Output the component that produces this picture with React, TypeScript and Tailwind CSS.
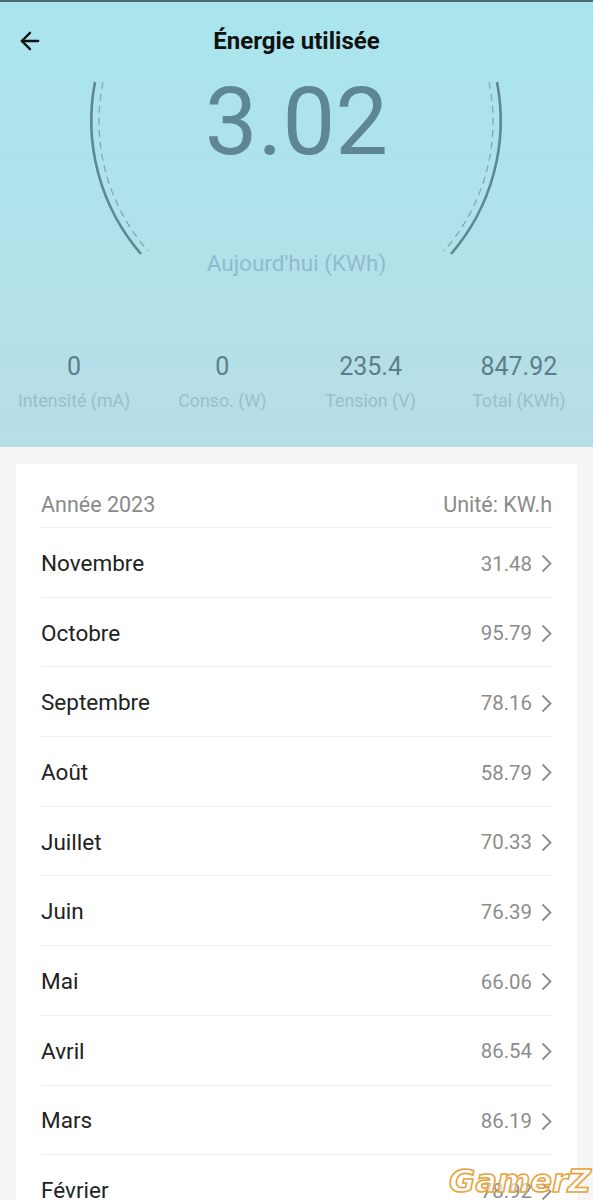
import { ArrowLeft } from 'lucide-react';

// ── Data ──────────────────────────────────────────────────────────────────────

const STATS = [
  { value: '0', label: 'Intensité (mA)' },
  { value: '0', label: 'Conso. (W)' },
  { value: '235.4', label: 'Tension (V)' },
  { value: '847.92', label: 'Total (KWh)' },
];

const MONTHS = [
  { name: 'Novembre', kwh: '31.48' },
  { name: 'Octobre', kwh: '95.79' },
  { name: 'Septembre', kwh: '78.16' },
  { name: 'Août', kwh: '58.79' },
  { name: 'Juillet', kwh: '70.33' },
  { name: 'Juin', kwh: '76.39' },
  { name: 'Mai', kwh: '66.06' },
  { name: 'Avril', kwh: '86.54' },
  { name: 'Mars', kwh: '86.19' },
  { name: 'Février', kwh: '78.92' },
];

// ── Gauge arcs ────────────────────────────────────────────────────────────────

function GaugeArcs() {
  // circle centred at (296,127), drawn in page coordinates
  return (
    <svg
      className="absolute left-0 top-0"
      width="593"
      height="300"
      viewBox="0 0 593 300"
      fill="none"
    >
      <path d="M95 80 A204 204 0 0 0 141 252" stroke="#5f8693" strokeWidth="2.6" />
      <path d="M497 80 A204 204 0 0 1 451 252" stroke="#5f8693" strokeWidth="2.6" />
      <path
        d="M103 80 A196 196 0 0 0 148 249"
        stroke="#7fa3ad"
        strokeWidth="1.2"
        strokeDasharray="7 5"
      />
      <path
        d="M489 80 A196 196 0 0 1 444 249"
        stroke="#7fa3ad"
        strokeWidth="1.2"
        strokeDasharray="7 5"
      />
    </svg>
  );
}

function Chevron() {
  return (
    <svg width="11" height="19" viewBox="0 0 11 19" fill="none" className="ml-[9px]">
      <path d="M1.5 1.5 L9.5 9.5 L1.5 17.5" stroke="#8c8c8c" strokeWidth="1.8" />
    </svg>
  );
}

// ── Page ──────────────────────────────────────────────────────────────────────

export default function App() {
  return (
    <div className="relative h-[1200px] w-[593px] overflow-hidden bg-[#f5f5f5] font-['Roboto',sans-serif]">
      <header className="relative h-[447px] border-t-2 border-[#4d6c76] bg-gradient-to-b from-[#a9e5ed] to-[#b8dee7]">
        <GaugeArcs />

        <div className="relative flex h-[80px] items-start pt-[16px]">
          <button type="button" className="ml-[16px] mt-[9px] text-[#111]">
            <ArrowLeft className="h-[28px] w-[28px]" strokeWidth={2} />
          </button>
          <h1 className="absolute left-0 right-0 top-[24px] text-center text-[24px] font-bold leading-[30px] text-[#111]">
            Énergie utilisée
          </h1>
        </div>

        <div className="relative flex flex-col items-center">
          <p className="mt-[-10px] text-[94px] leading-[100px] text-[#5f8694]">3.02</p>
          <p className="mt-[77px] text-[22.5px] leading-[28px] text-[#8fbccb]">Aujourd&apos;hui (KWh)</p>
        </div>

        <div className="relative mt-[75px] grid grid-cols-4">
          {STATS.map((s) => (
            <div key={s.label} className="flex flex-col items-center">
              <span className="text-[25px] leading-[30px] text-[#5b7f8a]">{s.value}</span>
              <span className="mt-[8px] text-[17.8px] leading-[22px] text-[#98c0ca]">{s.label}</span>
            </div>
          ))}
        </div>
      </header>

      <section className="mx-[16px] mt-[17px] bg-white px-[25px]">
        <div className="flex h-[64px] items-end justify-between border-b border-[#eeeeee] pb-[8px] text-[21.5px] leading-[28px] text-[#8a8a8a]">
          <span>Année 2023</span>
          <span>Unité: KW.h</span>
        </div>
        {MONTHS.map((m) => (
          <div
            key={m.name}
            className="flex h-[69.7px] items-center justify-between border-b border-[#eeeeee] pt-[3px]"
          >
            <span className="text-[22.5px] text-[#222]">{m.name}</span>
            <span className="flex items-center text-[20.4px] text-[#8c8c8c]">
              {m.kwh}
              <Chevron />
            </span>
          </div>
        ))}
      </section>

      <span className="absolute bottom-[2px] right-[2px] font-['DejaVu_Sans',sans-serif] text-[32px] font-bold italic leading-[34px] text-white/60 [-webkit-text-stroke:1.6px_#e8a33c]">
        GamerZ
      </span>
    </div>
  );
}
